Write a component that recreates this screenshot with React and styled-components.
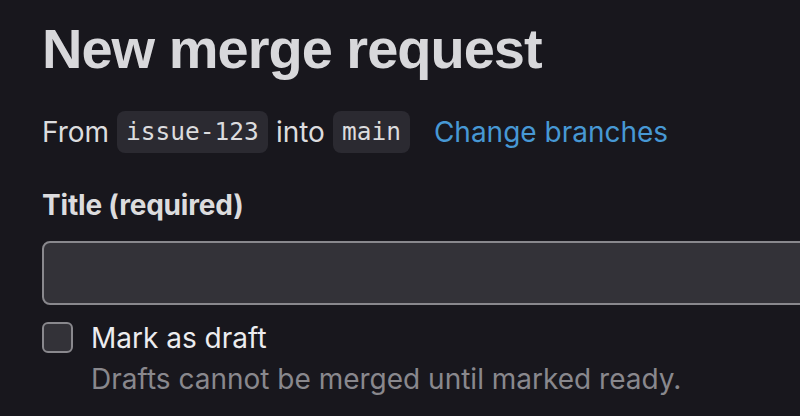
import styled, { createGlobalStyle } from "styled-components";

const Global = createGlobalStyle`
    html, body {
        margin: 0;
        padding: 0;
        background: #18171d;
        overflow: hidden;
    }
    body {
        font-family: Inter, "Noto Sans", "Liberation Sans", sans-serif;
        color: #dcdcde;
    }
`;

const Page = styled.div`
    width: 100vw;
    height: 416px;
    overflow: hidden;
    padding: 14px 0 0 42px;
    box-sizing: border-box;
`;

const Heading = styled.h1`
    margin: 0;
    font-family: "Liberation Sans", Arial, sans-serif;
    font-size: 56px;
    line-height: 70px;
    font-weight: 700;
    letter-spacing: -1px;
    color: #d8d8db;
`;

const BranchRow = styled.div`
    display: flex;
    align-items: center;
    gap: 8px;
    margin-top: 27px;
    font-size: 28px;
    line-height: 42px;
    color: #dcdcde;
`;

const Branch = styled.code`
    font-family: "DejaVu Sans Mono", "Liberation Mono", monospace;
    font-size: 24.5px;
    line-height: 42px;
    padding: 0 9px;
    border-radius: 8px;
    background: #2b2a31;
    color: #dcdcde;
`;

const Link = styled.a`
    margin-left: 16px;
    color: #4798d4;
    text-decoration: none;
`;

const Label = styled.label`
    display: block;
    margin-top: 32px;
    font-size: 28px;
    line-height: 40px;
    font-weight: 700;
    letter-spacing: -0.2px;
    color: #dcdcde;
`;

const TextInput = styled.div`
    margin-top: 16px;
    width: calc(100% + 40px);
    height: 64px;
    box-sizing: border-box;
    border: 2px solid #89888d;
    border-radius: 8px;
    background: #333238;
`;

const CheckRow = styled.div`
    display: flex;
    gap: 18px;
    margin-top: 17px;
`;

const Box = styled.span`
    width: 31px;
    height: 31px;
    box-sizing: border-box;
    flex-shrink: 0;
    border: 2px solid #89888d;
    border-radius: 6px;
    background: #333238;
`;

const CheckText = styled.div`
    display: flex;
    flex-direction: column;
`;

const CheckLabel = styled.span`
    font-size: 28px;
    line-height: 32px;
    color: #ececef;
`;

const Help = styled.span`
    margin-top: 7px;
    font-size: 28px;
    line-height: 36px;
    color: #89888d;
`;

export default function App() {
    return (
        <Page>
            <Global />
            <Heading>New merge request</Heading>
            <BranchRow>
                From <Branch>issue-123</Branch> into <Branch>main</Branch>
                <Link href="#">Change branches</Link>
            </BranchRow>
            <Label>Title (required)</Label>
            <TextInput />
            <CheckRow>
                <Box />
                <CheckText>
                    <CheckLabel>Mark as draft</CheckLabel>
                    <Help>Drafts cannot be merged until marked ready.</Help>
                </CheckText>
            </CheckRow>
        </Page>
    );
}
